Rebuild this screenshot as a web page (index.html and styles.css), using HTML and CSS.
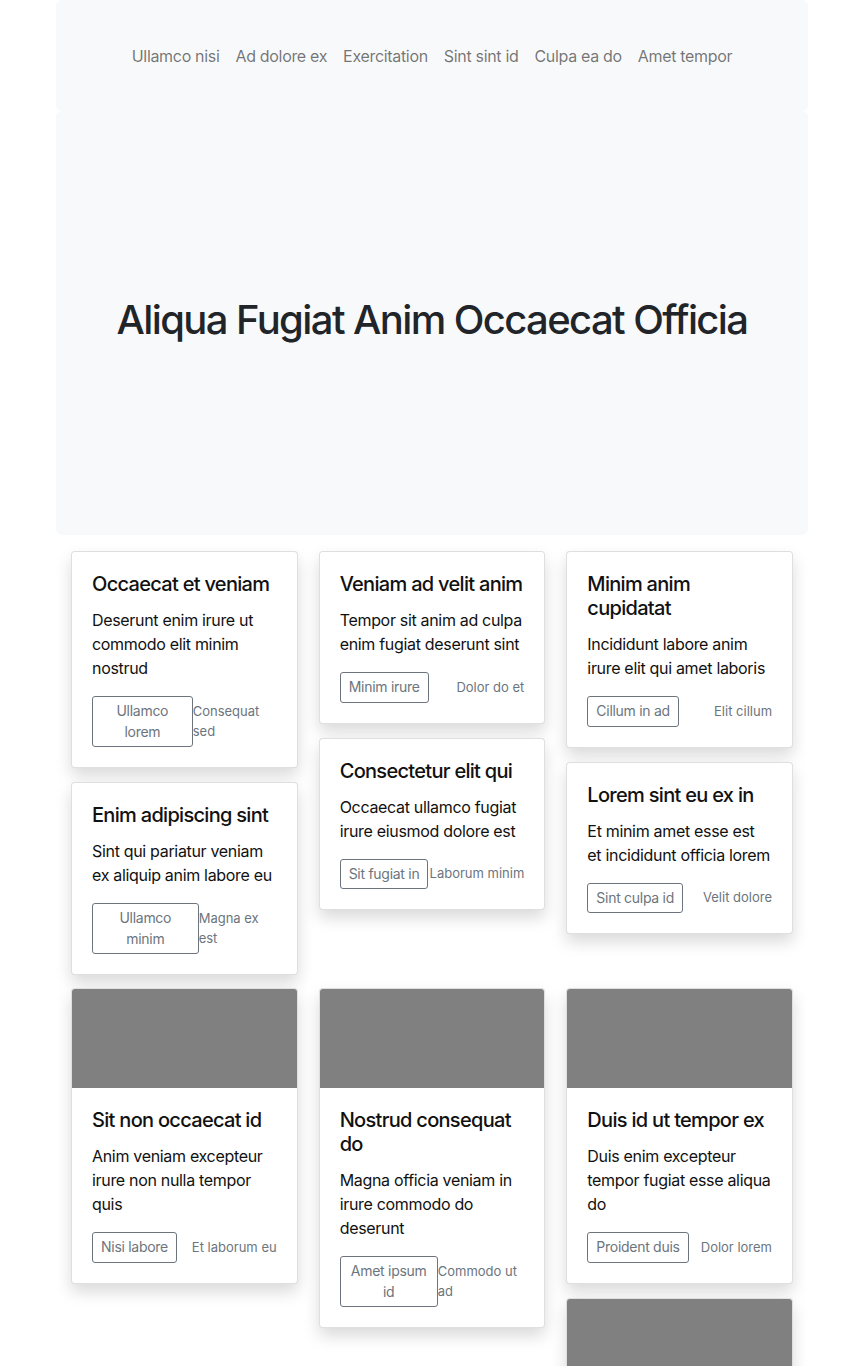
FILE: index.html
```html
<!DOCTYPE html>
<html lang="en">
<head>
<meta charset="utf-8">
<title>Album</title>
<link rel="stylesheet" href="styles.css">
</head>
<body>
<div class="container">
  <nav class="topnav">
    <a class="nav-link" href="#">Ullamco nisi</a>
    <a class="nav-link" href="#">Ad dolore ex</a>
    <a class="nav-link" href="#">Exercitation</a>
    <a class="nav-link" href="#">Sint sint id</a>
    <a class="nav-link" href="#">Culpa ea do</a>
    <a class="nav-link" href="#">Amet tempor</a>
  </nav>
  <header class="hero">
    <h1 class="hero-title">Aliqua Fugiat Anim Occaecat Officia</h1>
  </header>
  <main class="cards">
    <section class="masonry">
      <div class="col">
        <div class="card">
          <div class="card-body">
            <h5 class="card-title">Occaecat et veniam</h5>
            <p class="card-text">Deserunt enim irure ut commodo elit minim nostrud</p>
            <div class="card-foot"><button class="btn">Ullamco lorem</button><small class="muted">Consequat sed</small></div>
          </div>
        </div>
        <div class="card">
          <div class="card-body">
            <h5 class="card-title">Enim adipiscing sint</h5>
            <p class="card-text">Sint qui pariatur veniam ex aliquip anim labore eu</p>
            <div class="card-foot"><button class="btn">Ullamco minim</button><small class="muted">Magna ex est</small></div>
          </div>
        </div>
      </div>
      <div class="col">
        <div class="card">
          <div class="card-body">
            <h5 class="card-title">Veniam ad velit anim</h5>
            <p class="card-text">Tempor sit anim ad culpa enim fugiat deserunt sint</p>
            <div class="card-foot"><button class="btn">Minim irure</button><small class="muted">Dolor do et</small></div>
          </div>
        </div>
        <div class="card">
          <div class="card-body">
            <h5 class="card-title">Consectetur elit qui</h5>
            <p class="card-text">Occaecat ullamco fugiat irure eiusmod dolore est</p>
            <div class="card-foot"><button class="btn">Sit fugiat in</button><small class="muted">Laborum minim</small></div>
          </div>
        </div>
      </div>
      <div class="col">
        <div class="card">
          <div class="card-body">
            <h5 class="card-title">Minim anim cupidatat</h5>
            <p class="card-text">Incididunt labore anim irure elit qui amet laboris</p>
            <div class="card-foot"><button class="btn">Cillum in ad</button><small class="muted">Elit cillum</small></div>
          </div>
        </div>
        <div class="card">
          <div class="card-body">
            <h5 class="card-title">Lorem sint eu ex in</h5>
            <p class="card-text">Et minim amet esse est et incididunt officia lorem</p>
            <div class="card-foot"><button class="btn">Sint culpa id</button><small class="muted">Velit dolore</small></div>
          </div>
        </div>
      </div>
    </section>
    <section class="masonry second">
      <div class="col">
        <div class="card">
          <div class="card-img"></div>
          <div class="card-body">
            <h5 class="card-title">Sit non occaecat id</h5>
            <p class="card-text">Anim veniam excepteur irure non nulla tempor quis</p>
            <div class="card-foot"><button class="btn">Nisi labore</button><small class="muted">Et laborum eu</small></div>
          </div>
        </div>
      </div>
      <div class="col">
        <div class="card">
          <div class="card-img"></div>
          <div class="card-body">
            <h5 class="card-title">Nostrud consequat do</h5>
            <p class="card-text">Magna officia veniam in irure commodo do deserunt</p>
            <div class="card-foot"><button class="btn">Amet ipsum id</button><small class="muted">Commodo ut ad</small></div>
          </div>
        </div>
      </div>
      <div class="col">
        <div class="card">
          <div class="card-img"></div>
          <div class="card-body">
            <h5 class="card-title">Duis id ut tempor ex</h5>
            <p class="card-text">Duis enim excepteur tempor fugiat esse aliqua do</p>
            <div class="card-foot"><button class="btn">Proident duis</button><small class="muted">Dolor lorem</small></div>
          </div>
        </div>
        <div class="card">
          <div class="card-img"></div>
          <div class="card-body">
            <h5 class="card-title">Esse velit labore</h5>
            <p class="card-text">Cillum aute nisi dolor ex officia amet</p>
            <div class="card-foot"><button class="btn">Irure anim</button><small class="muted">Sunt minim</small></div>
          </div>
        </div>
      </div>
    </section>
  </main>
</div>
</body>
</html>
```
FILE: styles.css
```css
* { box-sizing: border-box; }

body {
  margin: 0;
  font-family: Inter, "Liberation Sans", sans-serif;
  font-size: 16px;
  line-height: 1.5;
  letter-spacing: -0.02em;
  color: #212529;
  background: #fff;
}

.container {
  width: 752px;
  margin: 0 auto;
}

.topnav {
  height: 111px;
  background: #f8f9fa;
  border-radius: 6px;
  display: flex;
  justify-content: center;
  align-items: center;
}

.nav-link {
  padding: 0 8px;
  color: rgba(0, 0, 0, 0.55);
  text-decoration: none;
  font-size: 16px;
}

.hero {
  height: 424px;
  background: #f8f9fa;
  border-radius: 6px;
  display: flex;
  justify-content: center;
  align-items: center;
}

.hero-title {
  margin: 0 0 6px;
  font-size: 40px;
  font-weight: 500;
  line-height: 1.2;
  letter-spacing: -0.04em;
}

.cards {
  margin-top: 16px;
  padding: 0 15px;
}

.masonry {
  display: flex;
  gap: 21px;
  align-items: flex-start;
}

.masonry.second {
  margin-top: 13px;
}

.col {
  flex: 1 1 0;
  min-width: 0;
  display: flex;
  flex-direction: column;
  gap: 14px;
}

.card {
  background: #fff;
  border: 1px solid rgba(0, 0, 0, 0.125);
  border-radius: 4px;
  box-shadow: 0 8px 16px rgba(0, 0, 0, 0.15);
  overflow: hidden;
}

.card-img {
  height: 99px;
  background: #808080;
}

.card-body {
  padding: 20px;
}

.card-title {
  margin: 0 0 12px;
  font-size: 20px;
  font-weight: 500;
  line-height: 1.2;
  letter-spacing: -0.035em;
  color: #111;
}

.card-text {
  margin: 0 0 16px;
  color: #111;
}

.card-foot {
  display: flex;
  justify-content: space-between;
  align-items: center;
}

.btn {
  font-family: inherit;
  font-size: 14px;
  line-height: 20.5px;
  letter-spacing: -0.02em;
  padding: 4px 8px;
  color: #6c757d;
  background: transparent;
  border: 1px solid #6c757d;
  border-radius: 3px;
}

.muted {
  font-size: 13px;
  letter-spacing: 0;
  color: #6c757d;
}
```
